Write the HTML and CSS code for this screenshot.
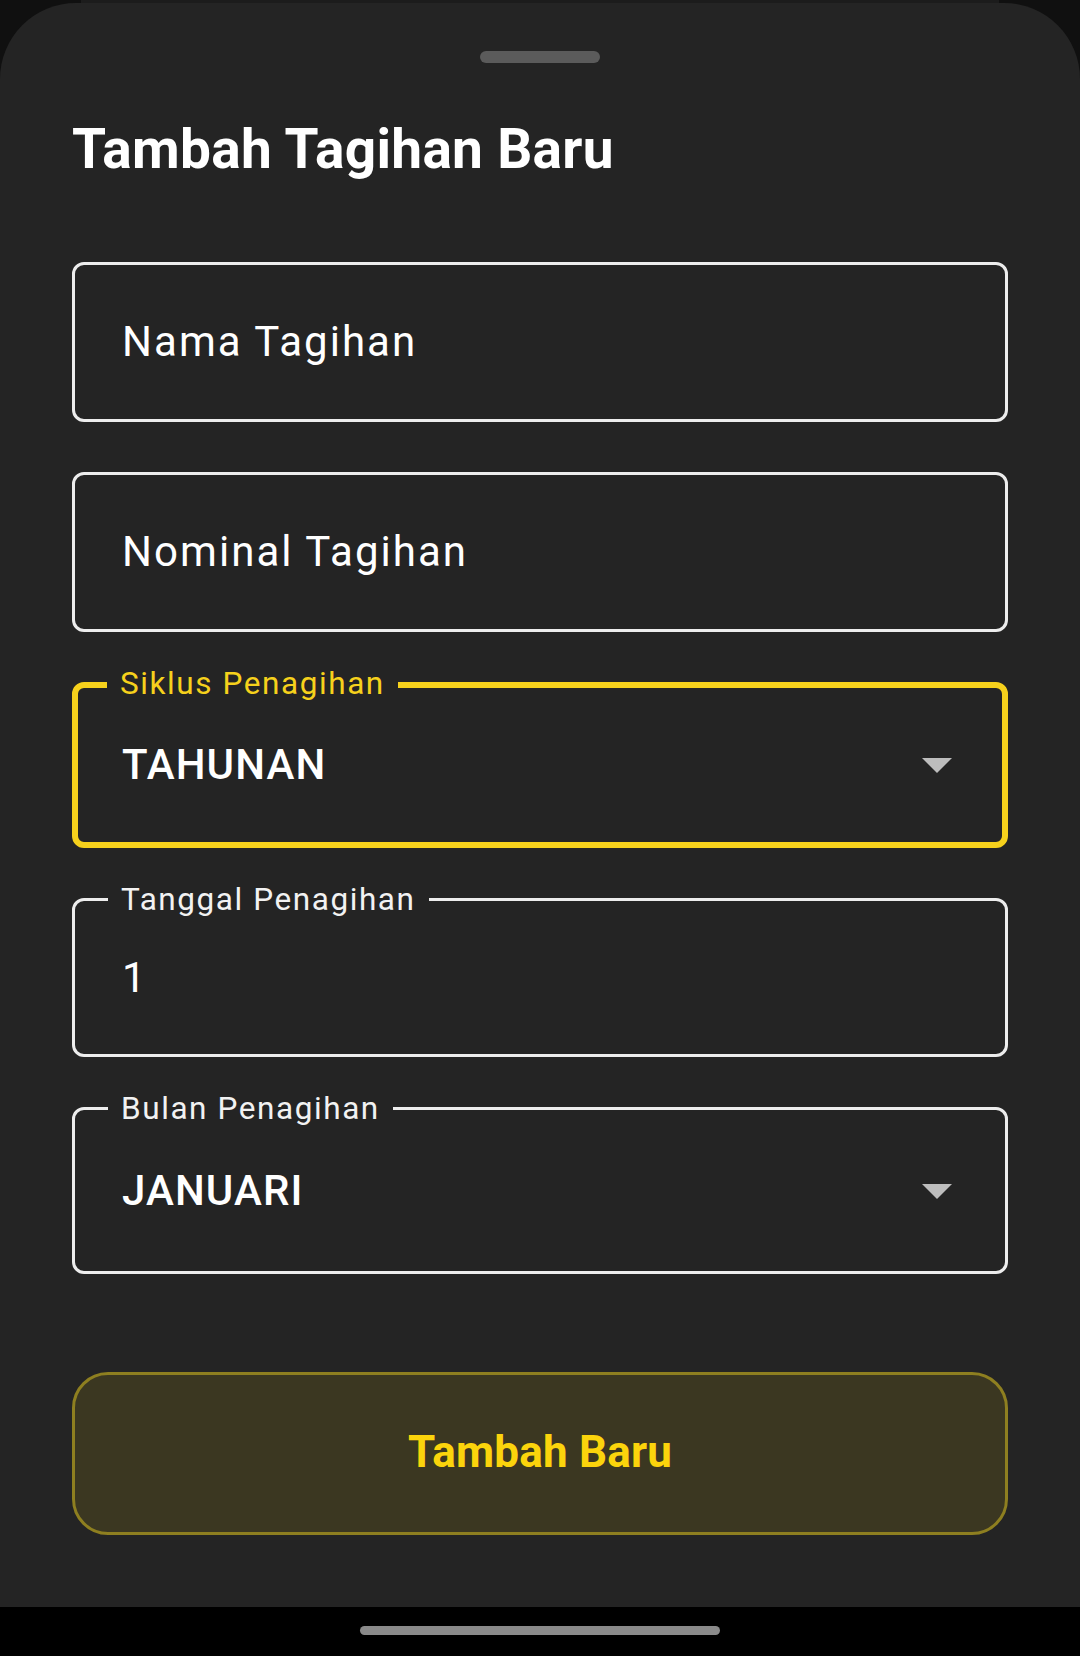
FILE: index.html
```html
<!DOCTYPE html>
<html lang="id">
<head>
<meta charset="utf-8">
<title>Tambah Tagihan Baru</title>
<link rel="stylesheet" href="styles.css">
</head>
<body>
<div class="screen">
  <div class="backdrop"></div>
  <div class="sheet">
    <div class="grabber"></div>
    <h1 class="title">Tambah Tagihan Baru</h1>
    <div class="form">
      <div class="field f-text">
        <span class="hint">Nama Tagihan</span>
      </div>
      <div class="field f-text">
        <span class="hint">Nominal Tagihan</span>
      </div>
      <div class="field f-drop focused">
        <span class="float-label">Siklus Penagihan</span>
        <span class="value">TAHUNAN</span>
        <svg class="caret" viewBox="0 0 30 15" width="30" height="15"><path d="M0 0H30L15 15Z"/></svg>
      </div>
      <div class="field f-date">
        <span class="float-label">Tanggal Penagihan</span>
        <span class="input">1</span>
      </div>
      <div class="field f-drop">
        <span class="float-label">Bulan Penagihan</span>
        <span class="value">JANUARI</span>
        <svg class="caret" viewBox="0 0 30 15" width="30" height="15"><path d="M0 0H30L15 15Z"/></svg>
      </div>
    </div>
    <button class="submit" type="button">Tambah Baru</button>
  </div>
  <div class="navbar"><div class="nav-handle"></div></div>
</div>
</body>
</html>
```

FILE: styles.css
```css
* { box-sizing: border-box; }
html, body { margin: 0; padding: 0; }
body {
  background: #101010;
  font-family: Roboto, "Noto Sans", "Liberation Sans", sans-serif;
  color: #ffffff;
}
.screen {
  width: 1080px;
  height: 1656px;
  display: flex;
  flex-direction: column;
  overflow: hidden;
}
.backdrop {
  height: 3px;
  margin: 0 81px;
  background: #1c1c1c;
  flex: none;
}
.sheet {
  flex: 1;
  background: #242424;
  border-radius: 76px 76px 0 0;
  padding: 48px 72px 0;
  display: flex;
  flex-direction: column;
}
.grabber {
  width: 120px;
  height: 12px;
  border-radius: 6px;
  background: #5b5b5b;
  margin: 0 auto;
  flex: none;
}
.title {
  margin: 54px 0 0;
  font-size: 55px;
  line-height: 64px;
  font-weight: 700;
  color: #ffffff;
  letter-spacing: 0.3px;
}
.form {
  margin-top: 81px;
  display: flex;
  flex-direction: column;
  gap: 50px;
}
.field {
  position: relative;
  display: flex;
  align-items: center;
  border: 3px solid #ededed;
  border-radius: 12px;
  padding: 0 53px 0 47px;
}
.f-text { height: 160px; }
.f-date { height: 159px; }
.f-drop { height: 167px; }
.field.focused {
  height: 166px;
  border: 6px solid #f6d11c;
  padding: 0 50px 0 44px;
}
.hint, .input {
  font-size: 42px;
  line-height: 50px;
  font-weight: 400;
  letter-spacing: 2.05px;
  color: #ffffff;
}
.value {
  flex: 1;
  font-size: 42px;
  line-height: 50px;
  font-weight: 500;
  letter-spacing: 1.1px;
  color: #ffffff;
}
.caret {
  flex: none;
  fill: #bdbdbd;
  margin-top: 1px;
}
.float-label {
  position: absolute;
  top: -19px;
  left: 33px;
  padding: 0 13px;
  background: #242424;
  font-size: 31.5px;
  line-height: 36px;
  letter-spacing: 1.58px;
  color: #f2f2f2;
  white-space: nowrap;
}
.focused .float-label {
  top: -22px;
  left: 29px;
  color: #f6d11c;
}
.submit {
  margin-top: 98px;
  height: 163px;
  width: 100%;
  border: 3px solid #8e7f20;
  border-radius: 36px;
  background: #3b3721;
  color: #fbd40c;
  font-family: Roboto, "Noto Sans", "Liberation Sans", sans-serif;
  font-size: 44px;
  font-weight: 700;
  letter-spacing: 0.2px;
  padding: 0 0 4px;
  flex: none;
}
.navbar {
  height: 49px;
  flex: none;
  background: #000000;
  display: flex;
  justify-content: center;
  padding-top: 19px;
}
.nav-handle {
  width: 360px;
  height: 9px;
  border-radius: 5px;
  background: #8a8a8a;
}
```
